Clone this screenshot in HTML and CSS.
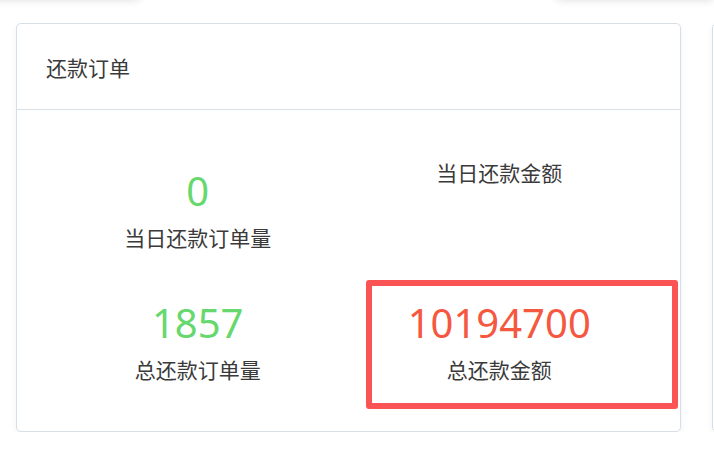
FILE: index.html
```html
<!DOCTYPE html>
<html lang="zh-CN">
<head>
<meta charset="UTF-8">
<meta name="viewport" content="width=device-width, initial-scale=1.0">
<title>还款订单</title>
<link rel="stylesheet" href="styles.css">
</head>
<body>

<div class="prev-row">
    <div class="prev-card prev-left"></div>
    <div class="prev-card prev-right"></div>
</div>

<div class="card-row">
    <div class="card">
        <div class="card-header">还款订单</div>
        <div class="card-body">
            <div class="stat">
                <div class="stat-num green">0</div>
                <div class="stat-label">当日还款订单量</div>
            </div>
            <div class="stat">
                <div class="stat-num red"></div>
                <div class="stat-label">当日还款金额</div>
            </div>
            <div class="stat">
                <div class="stat-num green">1857</div>
                <div class="stat-label">总还款订单量</div>
            </div>
            <div class="stat">
                <div class="stat-num red">10194700</div>
                <div class="stat-label">总还款金额</div>
            </div>
            <div class="highlight"></div>
        </div>
    </div>
    <div class="card card-next"></div>
</div>

</body>
</html>
```

FILE: styles.css
```css
/* Reset and basic styles */
* {
    box-sizing: border-box;
}
html, body {
    overflow: hidden;
}
body {
    margin: 0;
    background: #fff;
    font-family: "Noto Sans", "Noto Sans CJK SC", sans-serif;
    color: #333;
}

/* bottoms of the cards scrolled above */
.prev-row {
    display: flex;
    justify-content: space-between;
    height: 18px;
    margin-top: -20px;
}
.prev-card {
    height: 18px;
    background: #fff;
    border-radius: 4px;
    box-shadow: 0 2px 8px rgba(0,0,0,0.14);
}
.prev-left {
    width: 160px;
    margin-left: -20px;
}
.prev-right {
    width: 158px;
}

.card-row {
    display: flex;
    gap: 31px;
    margin-top: 25px;
    padding-left: 16px;
    width: 714px;
    overflow: hidden;
}
.card {
    flex: none;
    width: 665px;
    height: 409px;
    background: #fff;
    border: 1px solid #d6dee8;
    border-radius: 5px;
    box-shadow: 0 2px 6px rgba(0,0,0,0.06);
}
.card-next {
    width: 200px;
}
.card-header {
    height: 86px;
    padding: 0 29px;
    display: flex;
    align-items: center;
    font-size: 21px;
    color: #3a3a3a;
    border-bottom: 1px solid #d6dee8;
}
.card-body {
    position: relative;
    display: grid;
    grid-template-columns: 1fr 1fr;
    row-gap: 37px;
    padding: 48px 30px;
}
.stat {
    text-align: center;
}
.stat-num {
    height: 65px;
    line-height: 65px;
    font-size: 40px;
}
.stat-num:empty {
    display: none;
}
.stat-num.green {
    color: #66d86e;
}
.stat-num.red {
    color: #f5573f;
}
.stat-label {
    height: 30px;
    line-height: 30px;
    font-size: 21px;
    color: #3a3a3a;
}

/* annotation box drawn over the total amount */
.highlight {
    position: absolute;
    left: 349px;
    top: 170px;
    width: 312px;
    height: 129px;
    border: 6px solid #fa5454;
    border-radius: 3px;
}
```
